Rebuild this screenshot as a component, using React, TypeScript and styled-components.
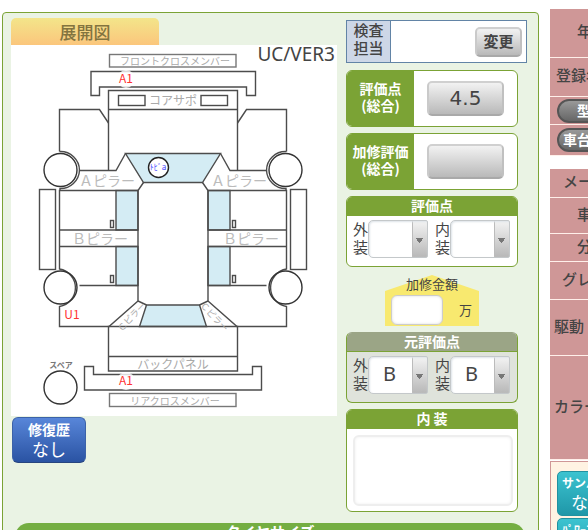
import React from 'react';
import styled, { createGlobalStyle } from 'styled-components';

const jp = '"Noto Sans CJK JP", "Noto Sans", sans-serif';
const latin = '"Noto Sans", "Noto Sans CJK JP", sans-serif';
const green = '#7ba335';

const GlobalStyle = createGlobalStyle`
  *, *::before, *::after { box-sizing: border-box; }
  body {
    margin: 0;
    height: 100vh;
    overflow: hidden;
    background: #fff;
    color: #444;
    font-family: ${jp};
  }
  button, input, select, textarea { font-family: inherit; color: inherit; margin: 0; }
`;

const Page = styled.div`
  display: grid;
  grid-template-columns: minmax(0, 1fr) 38px;
  gap: 11px;
  padding: 9px 0 0 2px;
`;

const Panel = styled.main`
  margin-top: 3px;
  padding: 5px 11px 12px 8px;
  border: 1px solid ${green};
  border-radius: 4px;
  background: #eaf3e4;
`;

const Columns = styled.div`
  display: grid;
  grid-template-columns: minmax(0, 1fr) 181px;
  gap: 9px;
`;

const Tab = styled.h2`
  width: 148px;
  margin: 0;
  border-radius: 5px 5px 0 0;
  background: linear-gradient(#f3e58a, #fbc67c);
  color: #82743f;
  font-size: 17px;
  font-weight: 500;
  line-height: 27px;
  text-align: center;
`;

const DiagramArea = styled.div`
  background: #fff;
  svg { display: block; width: 100%; height: auto; overflow: visible; }
`;

const RepairButton = styled.button`
  display: block;
  width: 74px;
  height: 46px;
  margin: 1px 0 0 1px;
  padding: 0 0 3px;
  border: 1px solid #3c62a8;
  border-bottom-color: #27457f;
  border-radius: 6px;
  background: linear-gradient(#5886d9, #2a53a3);
  color: #fff;
  font-size: 17px;
  line-height: 20px;
  strong { display: block; font-size: 14px; }
`;

const Ratings = styled.div`
  display: flex;
  flex-direction: column;
  gap: 6px;
  padding-top: 2px;
`;

const Inspector = styled.div`
  display: flex;
  align-items: center;
  justify-content: space-between;
  height: 43px;
  margin-bottom: 1px;
  padding-right: 4px;
  border: 1px solid #6284a6;
  background: #fff;
`;

const InspectorLabel = styled.div`
  align-self: stretch;
  width: 44px;
  border-right: 1px solid #6284a6;
  background: #cdd7e7;
  font-size: 15px;
  font-weight: 500;
  line-height: 18px;
  text-align: center;
`;

const GreyButton = styled.button<{ $wide?: boolean }>`
  width: ${p => (p.$wide ? 77 : 47)}px;
  height: ${p => (p.$wide ? 35 : 30)}px;
  padding: 0 0 2px;
  border: 2px solid;
  border-color: #d0d0d0 #c0c0c0 #a9a9a9 #cacaca;
  border-radius: 5px;
  background: linear-gradient(#f2f2f2, #b9b9b9);
  font-family: ${p => (p.$wide ? '"DejaVu Sans", sans-serif' : jp)};
  font-size: ${p => (p.$wide ? 20 : 15)}px;
  font-weight: ${p => (p.$wide ? 400 : 700)};
  line-height: 24px;
`;

const ScoreCard = styled.div`
  display: flex;
  width: 172px;
  height: 57px;
  border: 1px solid ${green};
  border-radius: 6px;
  background: #fff;
  overflow: hidden;
`;

const ScoreLabel = styled.div`
  display: flex;
  align-items: center;
  justify-content: center;
  width: 67px;
  padding-bottom: 3px;
  background: ${green};
  color: #fff;
  font-size: 14px;
  font-weight: 700;
  line-height: 17px;
  text-align: center;
  white-space: pre;
`;

const ScoreValue = styled.div`
  display: flex;
  flex: 1;
  align-items: center;
  justify-content: center;
`;

const Card = styled.section<{ $muted?: boolean }>`
  width: 172px;
  border: 1px solid ${green};
  border-color: ${p => (p.$muted ? '#9ba586' : green)} ${green} ${green};
  border-radius: 6px;
  background: ${p => (p.$muted ? '#dfe3db' : '#fff')};
  overflow: hidden;
`;

const CardTitle = styled.h3<{ $muted?: boolean }>`
  height: 19px;
  margin: 0;
  border-bottom: 1px solid ${green};
  background: ${p => (p.$muted ? '#9ba586' : green)};
  color: #fff;
  font-size: 14px;
  font-weight: 700;
  line-height: 17px;
  text-align: center;
`;

const GradeRow = styled.div`
  display: grid;
  grid-template-columns: 75px 75px;
  gap: 7px;
  height: 50px;
  padding: 4px 0 0 6px;
`;

const Grade = styled.label`
  display: flex;
  font-size: 15px;
  line-height: 18px;
`;

const GradeName = styled.span`
  width: 15px;
`;

const GradeSelect = styled.select`
  appearance: none;
  width: 60px;
  height: 38px;
  padding: 0 16px 3px 14px;
  border: 1px solid #c4c8ca;
  border-radius: 5px 2px 2px 5px;
  outline: none;
  background:
    linear-gradient(#777, #777) right 4px top 17px / 7px 1px no-repeat,
    linear-gradient(#777, #777) right 5px top 18px / 5px 2px no-repeat,
    linear-gradient(#777, #777) right 6px top 20px / 3px 1px no-repeat,
    linear-gradient(#777, #777) right 7px top 21px / 1px 1px no-repeat,
    linear-gradient(#f3f3f3, #b8b8b8) right / 14px 100% no-repeat,
    linear-gradient(#bbb, #bbb) right 14px top / 1px 100% no-repeat,
    #fff;
  box-shadow: inset 1px 1px 2px #dde3e8;
  font-family: ${latin};
  font-size: 20px;
  line-height: 30px;
`;

const RepairCost = styled.div`
  position: relative;
  z-index: 0;
  width: 94px;
  height: 53px;
  margin-left: 39px;
  padding: 2px 0 0 6px;
  font-size: 13px;
  line-height: 18px;
  &::before {
    content: '';
    position: absolute;
    z-index: -1;
    inset: 2px 0 0;
    background: #f8e96f;
    clip-path: polygon(50% 0, 100% 16px, 100% 100%, 0 100%, 0 16px);
  }
  label { display: block; padding-right: 6px; text-align: center; }
`;

const CostLine = styled.div`
  display: flex;
  align-items: center;
  gap: 16px;
  margin-top: 2px;
`;

const CostInput = styled.input`
  width: 52px;
  height: 30px;
  padding: 0 6px;
  border: 1px solid #ccc;
  border-radius: 6px;
  background: #fff;
  box-shadow: inset 0 0 3px #ddd;
`;

const Notes = styled.textarea`
  display: block;
  width: 160px;
  height: 71px;
  margin: 6px 0 5px 6px;
  padding: 6px;
  border: 2px solid #eee;
  border-radius: 6px;
  box-shadow: inset 0 0 3px #eee;
  resize: none;
`;

const TireBar = styled.h2`
  height: 32px;
  margin: 11px 2px 0 4px;
  border-radius: 14px 14px 0 0;
  background: #74ae42;
  color: #fff;
  font-size: 15px;
  font-weight: 700;
  line-height: 17px;
  text-align: center;
`;

const Side = styled.aside`
  overflow: hidden;
`;

const Specs = styled.table`
  width: 84px;
  margin-bottom: 13px;
  border-collapse: separate;
  border-spacing: 0;
`;

const SpecName = styled.th<{ $height: number; $indent: number; $plain: boolean }>`
  height: ${p => p.$height}px;
  padding: 0 0 ${p => (p.$plain ? 4 : 0)}px ${p => p.$indent}px;
  border-bottom: 1px solid #fff0ea;
  background: #cf9797;
  font-size: 15px;
  font-weight: 500;
  line-height: 20px;
  text-align: left;
  white-space: nowrap;
`;

const Pill = styled.button<{ $indent: number }>`
  display: block;
  width: 76px;
  height: 24px;
  padding: 0 0 2px ${p => p.$indent}px;
  border: 2px solid #555;
  border-radius: 12px;
  background: linear-gradient(#999, #666);
  color: #fff;
  font-size: 14px;
  font-weight: 700;
  line-height: 18px;
  text-align: left;
`;

const Options = styled.div`
  display: grid;
  gap: 2px;
  width: 84px;
  margin-top: -12px;
  padding: 9px 0 9px 6px;
  border: 1px solid #cf9797;
  background: #fff3e3;
`;

const OptionButton = styled.button`
  display: flex;
  flex-direction: column;
  width: 74px;
  height: 45px;
  padding: 2px 0 0 4px;
  border: 1px solid #2191a0;
  border-radius: 5px;
  background: linear-gradient(#3cc3d0, #1f97a8);
  color: #fff;
  font-size: 17px;
  line-height: 21px;
  text-align: left;
  white-space: nowrap;
  small { font-size: 12px; font-weight: 700; line-height: 17px; }
  span { padding-left: 9px; }
`;

const Label = styled.text<{ $size: number; $bold?: boolean; $fill?: string }>`
  font-family: ${jp};
  font-size: ${p => p.$size}px;
  font-weight: ${p => (p.$bold ? 700 : 400)};
  fill: ${p => p.$fill || '#aaa'};
  text-anchor: middle;
`;

const Version = styled.text`
  font-family: ${latin};
  font-size: 19px;
  fill: #444;
  text-anchor: end;
`;

function BodySide() {
  return (
    <g>
      <path d="M59.5 151.5V109.5H99.5L108.5 123" />
      <path d="M59.5 151.5A19 19 0 0 1 79.5 170.5H116L125.5 153.5" />
      <path d="M79.5 170.5A19 19 0 0 1 60 188.5V190.5" />
      <circle cx="60.5" cy="170" r="16.5" stroke="#333" />
      <rect x="39.5" y="189.5" width="16" height="80" />
      <rect x="116" y="190.5" width="22" height="39.5" fill="#d4ecf4" />
      <rect x="116" y="246.5" width="22" height="39" fill="#d4ecf4" />
      <path d="M138 190.5H59.5V269A19 19 0 0 1 59.5 306.5V326.5H109L138 301" />
      <path d="M59.5 230H138M59.5 246.5H138M79.5 285.5H138" />
      <path d="M143.5 182.5L138 190.5V301L146.5 305" />
      <rect x="110.5" y="220.5" width="3" height="7" />
      <rect x="110.5" y="275.5" width="3" height="7" />
      <circle cx="60.5" cy="287.5" r="16.5" stroke="#333" />
    </g>
  );
}

function Mark({ x, y, children }: { x: number; y: number; children: string }) {
  return (
    <g>
      <circle cx={x} cy={y} r="9" fill="#fff" fillOpacity="0.8" />
      <Label x={x} y={y + 4} $size={12} $fill="#f33">{children}</Label>
    </g>
  );
}

function CarDiagram() {
  return (
    <svg viewBox="11 45 326 371" role="img" aria-label="展開図">
      <g fill="none" stroke="#4c4c4c" strokeWidth="1.4">
        <path d="M125.5 153.5H220.5L202.5 182.5H143.5Z" fill="#d4ecf4" />
        <path d="M146.5 305H199.5L206.5 326.5H139.5Z" fill="#d4ecf4" />
        <rect x="109.5" y="54.5" width="126.5" height="12.5" stroke="#777" />
        <path d="M91 71.5H255.5V95.5H246.5V87H99.5V95.5H91Z" />
        <path d="M108.5 170.5V90.5H237.5V170.5M108.5 109.5H237.5" />
        <rect x="118.5" y="95.5" width="26.5" height="10" />
        <rect x="201" y="95.5" width="26.5" height="10" />
        <BodySide />
        <g transform="translate(346 0) scale(-1 1)"><BodySide /></g>
        <path d="M108.5 326.5H237.5V371H108.5ZM108.5 356.5H237.5" />
        <path d="M84.5 366.5H93.5V374.5H252.5V366.5H261.5V390H84.5Z" />
        <rect x="109.5" y="393.5" width="126.5" height="13" stroke="#777" />
        <circle cx="60.5" cy="387.5" r="16.5" stroke="#333" />
        <circle cx="158.5" cy="167.5" r="10" fill="#fff" stroke="#222" />
      </g>
      <Label x="175" y="65" $size={10}>フロントクロスメンバー</Label>
      <Label x="173" y="105" $size={12}>コアサポ</Label>
      <Label x="107" y="186" $size={14} $fill="#bbb">Ａピラー</Label>
      <Label x="239" y="186" $size={14} $fill="#bbb">Ａピラー</Label>
      <Label x="100" y="244" $size={14} $fill="#bbb">Ｂピラー</Label>
      <Label x="251" y="244" $size={14} $fill="#bbb">Ｂピラー</Label>
      <Label $size={9} transform="translate(134 319) rotate(-47)">Ｃピラー</Label>
      <Label $size={9} transform="translate(212 319) rotate(47)">Ｃピラー</Label>
      <Label x="173" y="369" $size={12}>バックパネル</Label>
      <Label x="175" y="405" $size={10}>リアクロスメンバー</Label>
      <Label x="61" y="368" $size={8} $bold $fill="#777">スペア</Label>
      <Label x="158" y="170" $size={8} $fill="#44f">ﾄﾋﾞa</Label>
      <Mark x={126} y={79}>A1</Mark>
      <Mark x={72} y={315}>U1</Mark>
      <Mark x={126} y={381}>A1</Mark>
      <Version x="335" y="61">UC/VER3</Version>
    </svg>
  );
}

function Grades({ value }: { value: string }) {
  return (
    <GradeRow>
      {[['外', '装'], ['内', '装']].map(([a, b]) => (
        <Grade key={a}>
          <GradeName>{a}{b}</GradeName>
          <GradeSelect defaultValue={value}>
            <option value={value}>{value}</option>
          </GradeSelect>
        </Grade>
      ))}
    </GradeRow>
  );
}

type Spec = { name: string; height: number; indent: number; button?: boolean };

const registration: Spec[] = [
  { name: '年', height: 49, indent: 27 },
  { name: '登録年', height: 39, indent: 6 },
  { name: '型', height: 28, indent: 18, button: true },
  { name: '車台', height: 31, indent: 4, button: true },
];

const vehicle: Spec[] = [
  { name: 'メー', height: 29, indent: 13 },
  { name: '車', height: 36, indent: 27 },
  { name: '分', height: 28, indent: 27 },
  { name: 'グレ', height: 38, indent: 12 },
  { name: '駆動', height: 56, indent: 4 },
  { name: 'カラー', height: 104, indent: 4 },
];

function SpecTable({ rows }: { rows: Spec[] }) {
  return (
    <Specs>
      <tbody>
        {rows.map(r => (
          <tr key={r.name}>
            <SpecName scope="row" $height={r.height} $indent={r.button ? 7 : r.indent} $plain={!r.button}>
              {r.button ? <Pill $indent={r.indent}>{r.name}</Pill> : r.name}
            </SpecName>
          </tr>
        ))}
      </tbody>
    </Specs>
  );
}

export default function App() {
  return (
    <>
      <GlobalStyle />
      <Page>
        <Panel>
          <Columns>
            <div>
              <Tab>展開図</Tab>
              <DiagramArea><CarDiagram /></DiagramArea>
              <RepairButton><strong>修復歴</strong>なし</RepairButton>
            </div>
            <Ratings>
              <Inspector>
                <InspectorLabel>検査<br />担当</InspectorLabel>
                <GreyButton>変更</GreyButton>
              </Inspector>
              <ScoreCard>
                <ScoreLabel>{'評価点\n(総合)'}</ScoreLabel>
                <ScoreValue><GreyButton $wide>4.5</GreyButton></ScoreValue>
              </ScoreCard>
              <ScoreCard>
                <ScoreLabel>{'加修評価\n(総合)'}</ScoreLabel>
                <ScoreValue><GreyButton $wide aria-label="加修評価" /></ScoreValue>
              </ScoreCard>
              <Card>
                <CardTitle>評価点</CardTitle>
                <Grades value="" />
              </Card>
              <RepairCost>
                <label htmlFor="cost">加修金額</label>
                <CostLine><CostInput id="cost" />万</CostLine>
              </RepairCost>
              <Card $muted>
                <CardTitle $muted>元評価点</CardTitle>
                <Grades value="B" />
              </Card>
              <Card>
                <CardTitle id="interior">内 装</CardTitle>
                <Notes aria-labelledby="interior" />
              </Card>
            </Ratings>
          </Columns>
          <TireBar>タイヤサイズ</TireBar>
        </Panel>
        <Side>
          <SpecTable rows={registration} />
          <SpecTable rows={vehicle} />
          <Options>
            <OptionButton><small>サンバ</small><span>な</span></OptionButton>
            <OptionButton><small>ﾊﾟﾜｰｽ</small></OptionButton>
          </Options>
        </Side>
      </Page>
    </>
  );
}
